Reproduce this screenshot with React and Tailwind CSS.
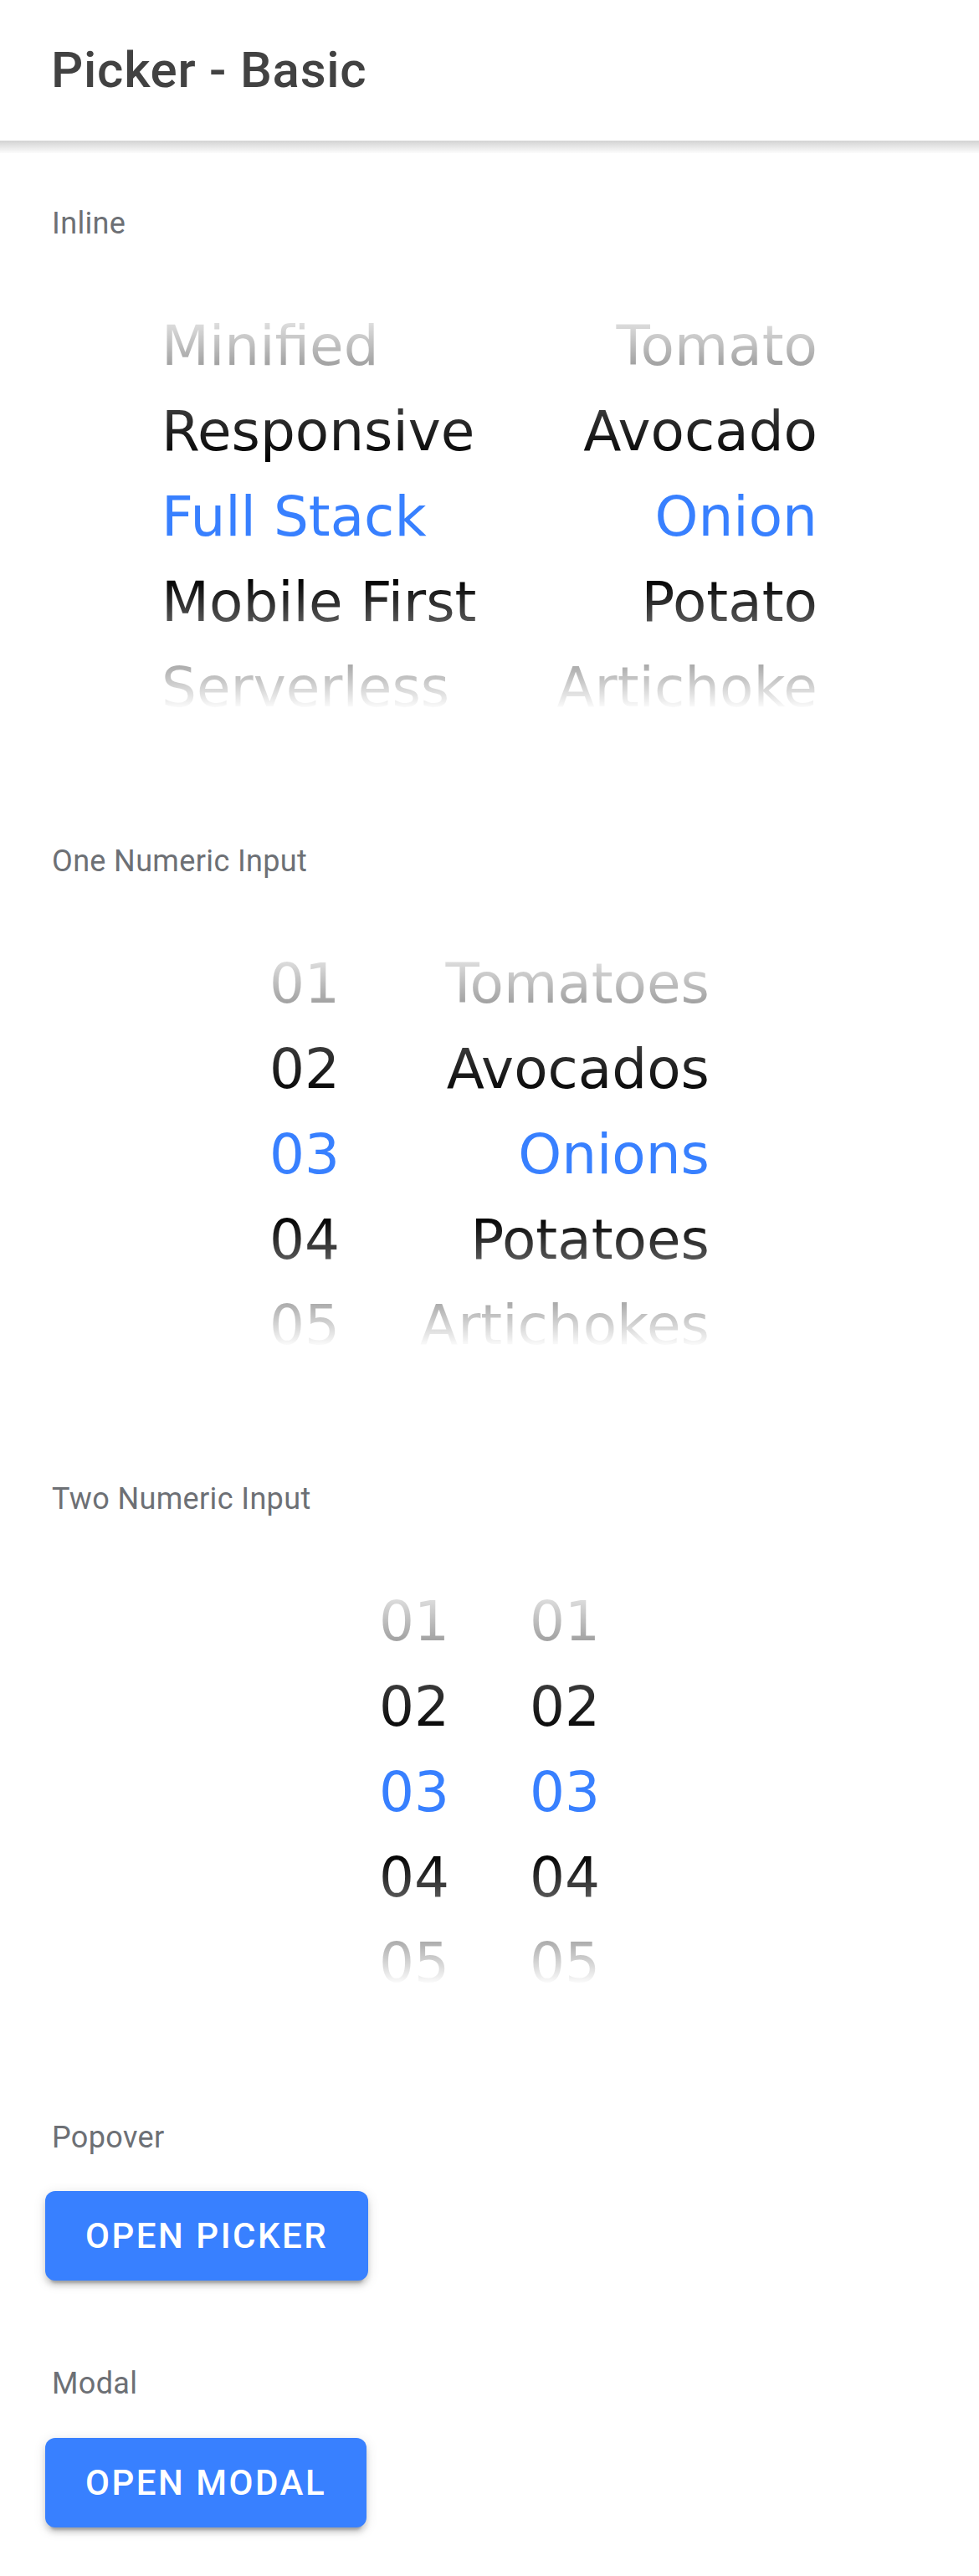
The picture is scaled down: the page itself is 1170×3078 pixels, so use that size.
import React from "react";

const roboto = { fontFamily: "Roboto, 'Liberation Sans', sans-serif" };
const dejavu = { fontFamily: "'DejaVu Sans', 'Liberation Sans', sans-serif", fontKerning: "normal" };

const sections = [
  {
    label: "Inline",
    columns: [
      { items: ["Minified", "Responsive", "Full Stack", "Mobile First", "Serverless"], align: "text-left" },
      { items: ["Tomato", "Avocado", "Onion", "Potato", "Artichoke"], align: "text-right" },
    ],
  },
  {
    label: "One Numeric Input",
    columns: [
      { items: ["01", "02", "03", "04", "05"], align: "text-left" },
      { items: ["Tomatoes", "Avocados", "Onions", "Potatoes", "Artichokes"], align: "text-right" },
    ],
  },
  {
    label: "Two Numeric Input",
    columns: [
      { items: ["01", "02", "03", "04", "05"], align: "text-left" },
      { items: ["01", "02", "03", "04", "05"], align: "text-left" },
    ],
  },
];

function Picker({ columns }) {
  return (
    <div className="relative h-[600px] overflow-hidden">
      <div className="flex h-full items-center justify-center gap-[96px]" style={dejavu}>
        {columns.map((col, ci) => (
          <div key={ci} className={`flex flex-col ${col.align}`}>
            {col.items.map((item, i) => (
              <div
                key={item + i}
                className={`h-[102px] whitespace-nowrap text-[66px] leading-[102px] ${
                  i === 2 ? "text-[#3880ff]" : "text-black"
                }`}
              >
                {item}
              </div>
            ))}
          </div>
        ))}
      </div>
      {/* fades top / bottom */}
      <div className="pointer-events-none absolute inset-x-0 top-0 h-[240px] bg-[linear-gradient(to_bottom,rgba(255,255,255,1)_40px,rgba(255,255,255,0.63)_119px,rgba(255,255,255,0.22)_172px,rgba(255,255,255,0)_232px)]" />
      <div className="pointer-events-none absolute inset-x-0 bottom-0 h-[240px] bg-[linear-gradient(to_top,rgba(255,255,255,1)_70px,rgba(255,255,255,0.67)_123px,rgba(255,255,255,0.33)_176px,rgba(255,255,255,0)_226px)]" />
    </div>
  );
}

function Label({ children }) {
  return (
    <div className="pl-[62px] text-[36px] leading-[54px] tracking-[0.01em] text-[#6d7075]" style={roboto}>
      {children}
    </div>
  );
}

function BlueButton({ children }) {
  return (
    <button
      className="ml-[54px] flex h-[107px] items-center rounded-[12px] bg-[#3880ff] px-[48px] text-[42px] font-medium tracking-[0.06em] text-white shadow-[0_9px_3px_-6px_rgba(0,0,0,0.2),0_6px_6px_0_rgba(0,0,0,0.14),0_3px_15px_0_rgba(0,0,0,0.12)]"
      style={roboto}
    >
      {children}
    </button>
  );
}

export default function App() {
  return (
    <div className="min-h-[3078px] w-[1170px] bg-white">
      <header className="flex h-[168px] items-center bg-white pl-[61px]">
        <h1 className="text-[60px] font-medium tracking-[0.0125em] text-[#424242]" style={roboto}>
          Picker - Basic
        </h1>
      </header>
      <div className="h-[15px] bg-gradient-to-b from-[#d3d3d3] to-[#fcfcfc]" />

      <div className="pt-[57px]">
        {sections.map((s, idx) => (
          <section key={s.label} className={idx === 0 ? "" : "mt-[84px]"}>
            <Label>{s.label}</Label>
            <div className="mt-[24px]">
              <Picker columns={s.columns} />
            </div>
          </section>
        ))}

        <section className="mt-[85px]">
          <Label>Popover</Label>
          <div className="mt-[37px]">
            <BlueButton>OPEN PICKER</BlueButton>
          </div>
        </section>

        <section className="mt-[96px]">
          <Label>Modal</Label>
          <div className="mt-[38px]">
            <BlueButton>OPEN MODAL</BlueButton>
          </div>
        </section>
      </div>
    </div>
  );
}
